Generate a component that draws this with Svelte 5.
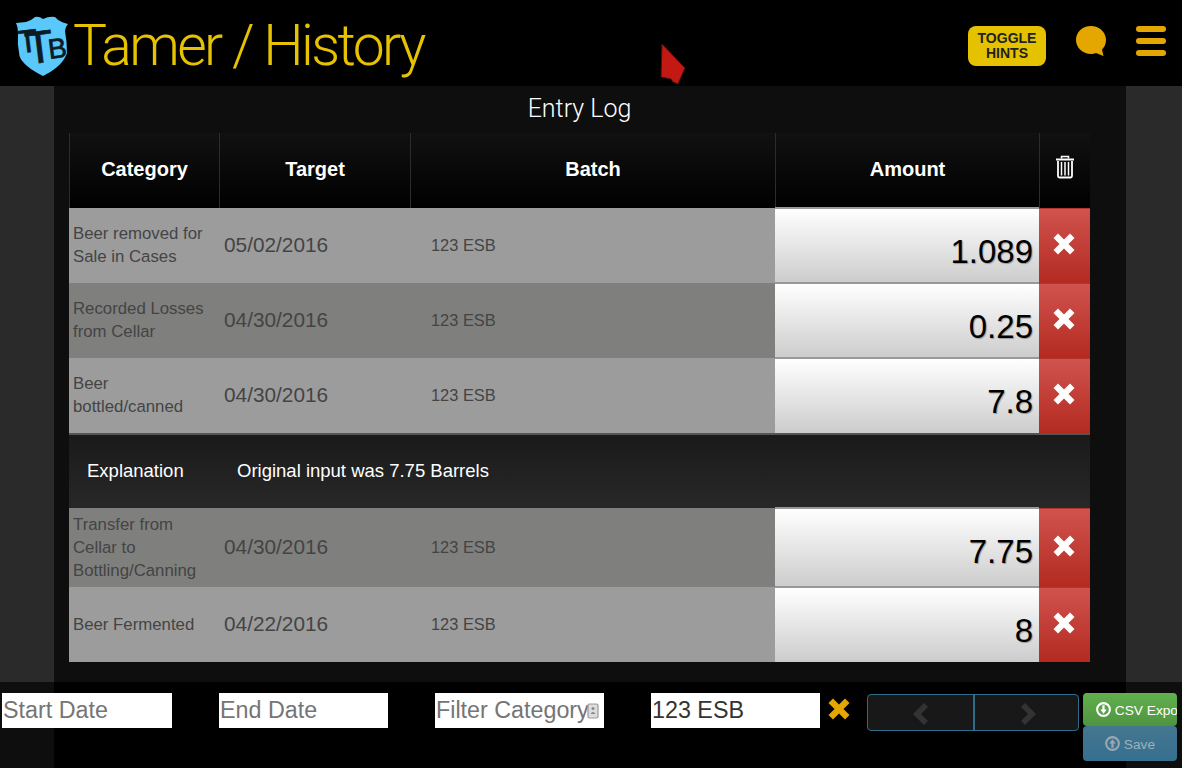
<script lang="ts">
const rows = [
	{ cat: 'Beer removed for Sale in Cases', date: '05/02/2016', batch: '123 ESB', amount: '1.089', tone: 'light', h: 75 },
	{ cat: 'Recorded Losses from Cellar', date: '04/30/2016', batch: '123 ESB', amount: '0.25', tone: 'dark', h: 75 },
	{ cat: 'Beer bottled/canned', date: '04/30/2016', batch: '123 ESB', amount: '7.8', tone: 'light', h: 75, note: 'Original input was 7.75 Barrels' },
	{ cat: 'Transfer from Cellar to Bottling/Canning', date: '04/30/2016', batch: '123 ESB', amount: '7.75', tone: 'dark', h: 79 },
	{ cat: 'Beer Fermented', date: '04/22/2016', batch: '123 ESB', amount: '8', tone: 'light', h: 75 },
];
</script>

<div class="page">
	<header class="topbar">
		<div class="brand">
			<svg class="logo" width="53" height="60" viewBox="0 0 53 60">
				<path d="M1 7 L11 6 Q17 4 20 1 Q24 0 28 3 Q34 0 40 1 Q43 5 48 6.500 L53 8 Q50 11 50 15 Q52 26 52 37 Q48 50 28 60 Q8 50 4.500 40 Q2 28 3 16 Q3 11 1 7Z" fill="#5ac8fa"/>
				<g font-family="Liberation Sans, sans-serif" fill="#0b1a24" stroke="#0b1a24" stroke-width=".7">
					<text x="3" y="36" font-size="32" transform="rotate(-7 13 25)">T</text>
					<text x="10" y="47" font-size="46" transform="rotate(-7 24 30)">T</text>
					<text x="33" y="42" font-size="28" transform="rotate(-7 41 32)">B</text>
				</g>
			</svg>
			<h1>Tamer / History</h1>
		</div>
		<div class="actions">
			<button class="hints">TOGGLE<br>HINTS</button>
			<svg class="chat" width="30" height="30" viewBox="0 0 30 30">
				<path d="M15 0 C23 0 30 6 30 14 C30 18.500 28 21.500 26 23.500 L27.500 30 L20 27 C18 27.700 16.500 28 15 28 C6.500 28 0 21.500 0 14 C0 6 6.500 0 15 0Z" fill="#e4a600"/>
			</svg>
			<div class="burger"><span></span><span></span><span></span></div>
		</div>
		<svg class="pointer" width="26" height="44" viewBox="0 0 26 44">
			<path d="M2 1 L25 25 L18 41 L13 39 L11 36 L1 34Z" fill="#c41812" stroke="#4a120c" stroke-width="1"/>
		</svg>
	</header>

	<main class="panel">
		<h2>Entry Log</h2>
		<table>
			<colgroup>
				<col style="width:150px"><col style="width:191px"><col style="width:365px"><col style="width:264px"><col style="width:51px">
			</colgroup>
			<thead>
				<tr>
					<th>Category</th>
					<th>Target</th>
					<th>Batch</th>
					<th>Amount</th>
					<th>
						<svg width="20" height="24" viewBox="0 0 20 24" class="trash">
							<path d="M6.500 3.500 V1.500 H13.500 V3.500" fill="none" stroke="#fff" stroke-width="1.500"/>
							<path d="M1 4.500 H19" stroke="#fff" stroke-width="2"/>
							<path d="M3 6 V21 Q3 22.500 4.500 22.500 H15.500 Q17 22.500 17 21 V6" fill="none" stroke="#fff" stroke-width="1.800"/>
							<path d="M6.500 7 V20.500 M10 7 V20.500 M13.500 7 V20.500" stroke="#fff" stroke-width="1.500"/>
						</svg>
					</th>
				</tr>
			</thead>
			<tbody>
				{#each rows as row}
					<tr class={row.tone} style="height:{row.h}px">
						<td class="cat">{row.cat}</td>
						<td class="date">{row.date}</td>
						<td class="batch">{row.batch}</td>
						<td class="amount"><div>{row.amount}</div></td>
						<td class="remove">
							<svg width="22" height="22" viewBox="0 0 22 22">
								<path d="M5 .5 L11 6.500 L17 .5 L21.500 5 L15.500 11 L21.500 17 L17 21.500 L11 15.500 L5 21.500 L.5 17 L6.500 11 L.5 5Z" fill="#fff"/>
							</svg>
						</td>
					</tr>
					{#if row.note}
						<tr class="note">
							<td colspan="5">
								<div class="note-row"><span class="note-label">Explanation</span><span>{row.note}</span></div>
							</td>
						</tr>
					{/if}
				{/each}
			</tbody>
		</table>
	</main>

	<footer class="filters">
		<input class="field start" placeholder="Start Date">
		<input class="field" placeholder="End Date">
		<div class="filter-wrap">
			<input class="field" placeholder="Filter Category">
			<svg class="autofill" width="12" height="16" viewBox="0 0 12 16">
				<rect x="1" y="1" width="10" height="14" rx="1.500" fill="#ddd" stroke="#999" stroke-width="1.200"/>
				<circle cx="6" cy="5.500" r="1.500" fill="#888"/>
				<path d="M3.500 11 Q6 7 8.500 11Z" fill="#888"/>
			</svg>
		</div>
		<input class="field batch-field" value="123 ESB">
		<svg class="clear" width="22" height="22" viewBox="0 0 22 22">
			<path d="M5 .5 L11 6.500 L17 .5 L21.500 5 L15.500 11 L21.500 17 L17 21.500 L11 15.500 L5 21.500 L.5 17 L6.500 11 L.5 5Z" fill="#e4a600"/>
		</svg>
		<div class="pager">
			<button aria-label="Previous"><svg width="18" height="24" viewBox="0 0 18 24"><path d="M12 1 L16 5 L9 12 L16 19 L12 23 L1 12Z" fill="#333"/></svg></button>
			<button aria-label="Next"><svg width="18" height="24" viewBox="0 0 18 24"><path d="M6 1 L2 5 L9 12 L2 19 L6 23 L17 12Z" fill="#333"/></svg></button>
		</div>
		<div class="stack">
			<button class="btn export">
				<svg width="15" height="15" viewBox="0 0 16 16"><circle cx="8" cy="8" r="6.800" fill="none" stroke="#fff" stroke-width="2.200"/><path d="M6.800 3.500 H9.200 V8 H11.500 L8 12.500 L4.500 8 H6.800Z" fill="#fff"/></svg>
				CSV Export
			</button>
			<button class="btn save">
				<svg width="15" height="15" viewBox="0 0 16 16"><circle cx="8" cy="8" r="6.800" fill="none" stroke="#9aa8b0" stroke-width="2.200"/><path d="M6.800 12.500 H9.200 V8 H11.500 L8 3.500 L4.500 8 H6.800Z" fill="#9aa8b0"/></svg>
				Save
			</button>
		</div>
	</footer>
</div>

<style>
:global(body) {
	margin: 0;
	background: #2a2a2a;
	font-family: "Liberation Sans", Arial, sans-serif;
}

.page {
	width: 1182px;
	height: 768px;
	display: flex;
	flex-direction: column;
	overflow: hidden;
}

.topbar {
	position: relative;
	height: 86px;
	flex: none;
	background: #000;
	display: flex;
	justify-content: space-between;
	align-items: flex-start;
}

.brand {
	display: flex;
	align-items: flex-start;
	padding: 16px 0 0 15px;
}

.logo {
	margin-right: 5px;
}

h1 {
	margin: -5px 0 0;
	font-family: Roboto, sans-serif;
	font-weight: 300;
	font-size: 57px;
	line-height: 70px;
	letter-spacing: -2.600px;
	color: #e6c200;
	white-space: nowrap;
}

.actions {
	display: flex;
	align-items: flex-start;
	padding: 26px 16px 0 0;
}

.hints {
	width: 78px;
	height: 40px;
	padding: 0;
	margin-right: 30px;
	border: 0;
	border-radius: 8px;
	background: #e4c200;
	color: #222;
	font: 700 14px/15px "Liberation Sans", Arial, sans-serif;
}

.chat {
	margin-right: 30px;
}

.burger {
	width: 30px;
	display: flex;
	flex-direction: column;
	gap: 6px;
}

.burger span {
	height: 6px;
	border-radius: 3px;
	background: #e4a600;
}

.pointer {
	position: absolute;
	left: 660px;
	top: 43px;
}

.panel {
	flex: 1;
	margin: 0 56px 0 54px;
	padding: 0 15px;
	background: #0e0e0e;
}

h2 {
	width: 1021px;
	margin: 0;
	height: 47px;
	font-family: Roboto, sans-serif;
	font-size: 25px;
	font-weight: 300;
	line-height: 45px;
	text-align: center;
	color: #fff;
}

table {
	width: 1021px;
	table-layout: fixed;
	border-collapse: separate;
	border-spacing: 0;
}

th {
	box-sizing: border-box;
	height: 75px;
	padding: 0 0 2px;
	background: linear-gradient(#111, #000);
	border-left: 1px solid #2c2c2c;
	color: #fff;
	font-size: 20px;
	font-weight: 700;
	text-align: center;
	vertical-align: middle;
}

.trash {
	display: block;
	margin: -6px auto 0;
}

td {
	padding: 0;
	color: #444;
}

tr.light td {
	background: #9c9c9c;
}

tr.dark td {
	background: #7f7f7e;
}

.cat {
	padding: 0 3px 1px 4px;
	font-size: 16.800px;
	line-height: 23px;
}

.date {
	padding: 0 0 2px 5px;
	font-size: 20.800px;
}

.batch {
	padding-left: 21px;
	font-size: 16.400px;
}

tr td.amount {
	background: #fff;
	height: 1px;
}

.amount div {
	box-sizing: border-box;
	height: calc(100% + 1px);
	margin-top: -1px;
	padding: 18px 6px 0 0;
	border-top: 2px solid #999;
	background: linear-gradient(#fff, #ccc);
	color: #000;
	font-size: 33px;
	line-height: 50px;
	text-align: right;
	text-shadow: 1px 1px 1px rgba(0, 0, 0, .3);
}

tr td.remove {
	box-sizing: border-box;
	padding-right: 2px;
	background: linear-gradient(#d0534e, #b32a20);
	border-top: 1px solid #b5332d;
	text-align: center;
}

.remove svg {
	display: block;
	margin: -4px auto 0;
}

.note td {
	box-sizing: border-box;
	height: 75px;
	padding-bottom: 2px;
	background: linear-gradient(#1a1a1a, #282828);
	border-top: 2px solid #555;
	color: #fff;
	font-size: 18.500px;
}

.note-row {
	display: flex;
	padding-left: 18px;
}

.note-label {
	width: 150px;
}

.filters {
	height: 86px;
	flex: none;
	box-sizing: border-box;
	padding: 11px 0 0 2px;
	display: flex;
	align-items: flex-start;
	background: linear-gradient(to right, #0e0e0e 54px, #000 54px, #000 1126px, #0e0e0e 1126px);
}

.field {
	display: block;
	box-sizing: border-box;
	width: 169px;
	height: 35px;
	margin-right: 47px;
	padding: 0 1px;
	border: 0;
	border-radius: 0;
	background: #fff;
	color: #333;
	font: 23.300px "Liberation Sans", Arial, sans-serif;
}

.start {
	width: 170px;
}

.filter-wrap {
	position: relative;
}

.autofill {
	position: absolute;
	left: 152px;
	top: 10px;
}

.batch-field {
	margin-right: 8px;
}

.clear {
	margin: 5px 17px 0 0;
	flex: none;
}

.pager {
	box-sizing: border-box;
	width: 212px;
	height: 37px;
	margin: 1px 4px 0 0;
	flex: none;
	display: flex;
	border: 1px solid #2f6c8a;
	border-radius: 4px;
	background: #181818;
	overflow: hidden;
}

.pager button {
	flex: none;
	width: 105px;
	padding: 2px 0 0;
	border: 0;
	background: none;
	display: flex;
	align-items: center;
	justify-content: center;
}

.pager button + button {
	padding-left: 2px;
	border-left: 2px solid #2f6c8a;
}

.stack {
	width: 94px;
	flex: none;
}

.btn {
	display: block;
	box-sizing: border-box;
	width: 94px;
	height: 34px;
	padding: 0 0 0 13px;
	border: 0;
	border-radius: 4px;
	text-align: left;
	white-space: nowrap;
	overflow: hidden;
	font: 13.700px "Liberation Sans", Arial, sans-serif;
}

.btn svg {
	vertical-align: -2px;
}

.export {
	height: 33px;
	background: linear-gradient(#62b04e, #4f9440);
	color: #fff;
}

.save {
	height: 35px;
	padding-left: 22px;
	background: linear-gradient(#45768f, #35708f);
	color: #9fb0ba;
}
</style>
